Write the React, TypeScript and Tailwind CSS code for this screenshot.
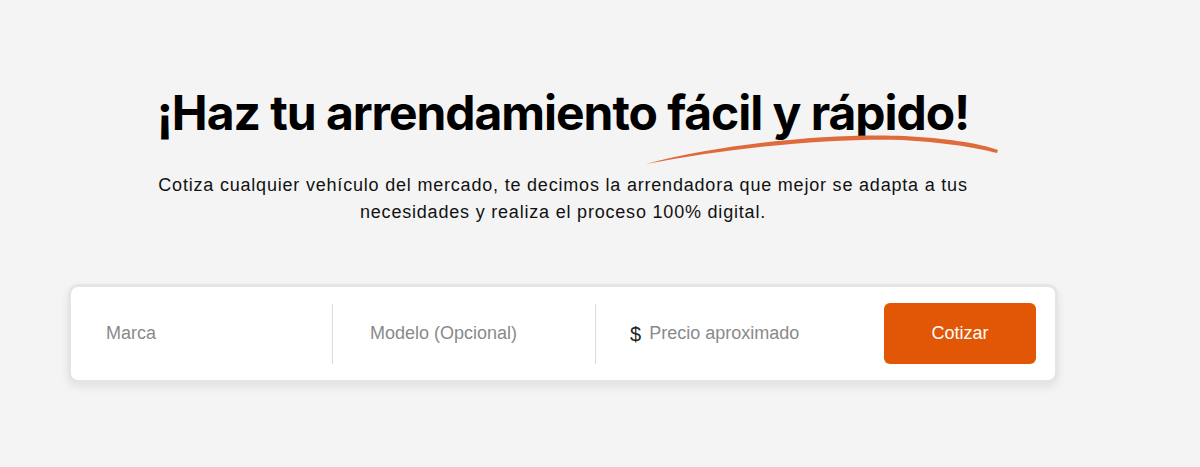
import React from 'react'

const Swoosh = () => (
  <svg
    className="absolute left-[487px] top-[50px]"
    width="356"
    height="36"
    viewBox="0 0 356 36"
    fill="none"
  >
    <path
      d="M2 33 C 80 12, 190 2, 260 5 C 300 7, 335 12, 354 19 L 353 22 C 330 16, 295 11, 258 9 C 190 7, 90 16, 2 33 Z"
      fill="#df6a3c"
    />
  </svg>
)

const Divider = () => <div className="h-[60px] w-px bg-[#dcdcdc]" />

export default function App() {
  return (
    <div className="min-h-[467px] w-full bg-[#f4f4f4]" style={{ fontFamily: '"Liberation Sans", Arial, sans-serif' }}>
      <div className="flex w-[1126px] flex-col items-center pt-[81px]">
        <div className="relative">
          <h1
            className="text-[48px] font-bold leading-[64px] tracking-[-1.05px] text-black"
            style={{ fontFamily: 'Inter, sans-serif' }}
          >
            ¡Haz tu arrendamiento fácil y rápido!
          </h1>
          <Swoosh />
        </div>
        <p className="mt-[27px] text-center text-[18px] leading-[27px] tracking-[0.8px] text-[#111]">
          Cotiza cualquier vehículo del mercado, te decimos la arrendadora que mejor se adapta a tus
          <br />
          necesidades y realiza el proceso 100% digital.
        </p>
        <div className="mt-[58px] flex w-[990px] items-center rounded-[10px] border-[3px] border-[#e5e5e5] bg-white py-[16px] pr-[19px] shadow-[0_4px_10px_rgba(0,0,0,0.08)]">
          <div className="flex w-[261px] items-center pl-[35px]">
            <span className="text-[18px] text-[#8a8a8a]">Marca</span>
          </div>
          <Divider />
          <div className="flex w-[262px] items-center pl-[37px]">
            <span className="text-[18px] text-[#8a8a8a]">Modelo (Opcional)</span>
          </div>
          <Divider />
          <div className="flex flex-1 items-center gap-[8px] pl-[34px]">
            <span className="text-[20px] text-[#222]">$</span>
            <span className="text-[18px] text-[#8a8a8a]">Precio aproximado</span>
          </div>
          <button className="h-[61px] w-[152px] rounded-[6px] bg-[#e25706] text-[18px] text-white">
            Cotizar
          </button>
        </div>
      </div>
    </div>
  )
}
